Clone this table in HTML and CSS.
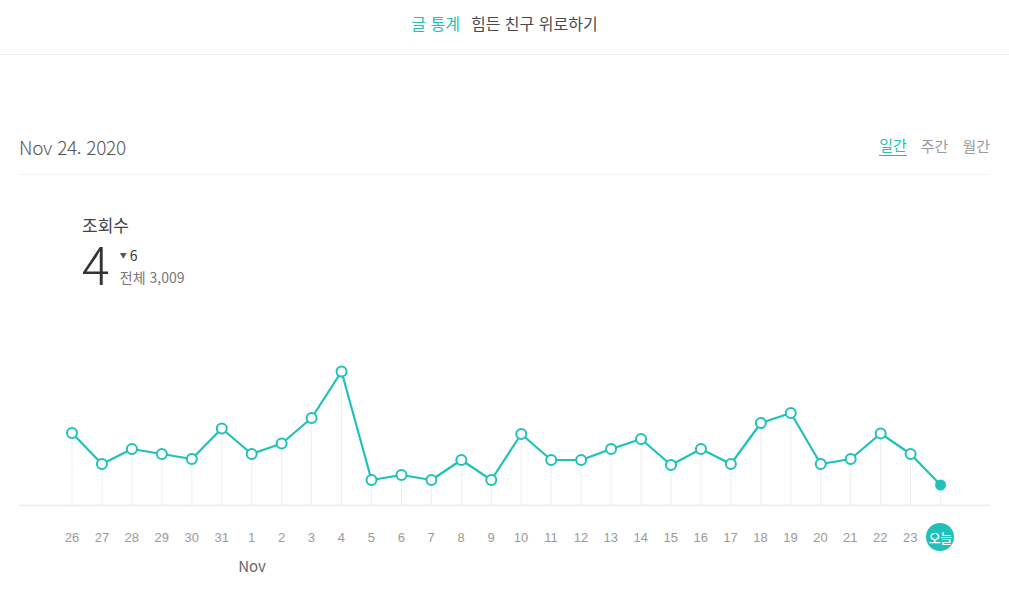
FILE: index.html
```html
<!DOCTYPE html>
<html lang="ko">
<head>
<meta charset="utf-8">
<title>글 통계</title>
<link rel="stylesheet" href="styles.css">
</head>
<body>
<header class="topnav">
  <a class="nav-item active">글 통계</a>
  <a class="nav-item">힘든 친구 위로하기</a>
</header>
<main class="main">
  <div class="date-row">
    <div class="date">Nov 24. 2020</div>
    <nav class="tabs">
      <a class="tab active">일간</a>
      <a class="tab">주간</a>
      <a class="tab">월간</a>
    </nav>
  </div>
  <section class="stats">
    <div class="stat-title">조회수</div>
    <div class="stat-row">
      <div class="stat-value">4</div>
      <div class="stat-side">
        <div class="stat-delta"><span class="tri">▼</span>6</div>
        <div class="stat-total">전체 3,009</div>
      </div>
    </div>
  </section>
  <section class="chart">
    <svg class="chart-svg" width="971" height="210" viewBox="0 0 971 210">
      <g class="grid" stroke="#efefef" stroke-width="1">
        <line x1="53" y1="133" x2="53" y2="205"/>
        <line x1="82.95" y1="164" x2="82.95" y2="205"/>
        <line x1="112.9" y1="149" x2="112.9" y2="205"/>
        <line x1="142.85" y1="154" x2="142.85" y2="205"/>
        <line x1="172.8" y1="159" x2="172.8" y2="205"/>
        <line x1="202.75" y1="128.5" x2="202.75" y2="205"/>
        <line x1="232.7" y1="154" x2="232.7" y2="205"/>
        <line x1="262.65" y1="143.5" x2="262.65" y2="205"/>
        <line x1="292.6" y1="118" x2="292.6" y2="205"/>
        <line x1="322.55" y1="71.5" x2="322.55" y2="205"/>
        <line x1="352.5" y1="180" x2="352.5" y2="205"/>
        <line x1="382.45" y1="175" x2="382.45" y2="205"/>
        <line x1="412.4" y1="180" x2="412.4" y2="205"/>
        <line x1="442.35" y1="160" x2="442.35" y2="205"/>
        <line x1="472.3" y1="180" x2="472.3" y2="205"/>
        <line x1="502.25" y1="134" x2="502.25" y2="205"/>
        <line x1="532.2" y1="160" x2="532.2" y2="205"/>
        <line x1="562.15" y1="160" x2="562.15" y2="205"/>
        <line x1="592.1" y1="149" x2="592.1" y2="205"/>
        <line x1="622.05" y1="139" x2="622.05" y2="205"/>
        <line x1="652" y1="165" x2="652" y2="205"/>
        <line x1="681.95" y1="149" x2="681.95" y2="205"/>
        <line x1="711.9" y1="164" x2="711.9" y2="205"/>
        <line x1="741.85" y1="123" x2="741.85" y2="205"/>
        <line x1="771.8" y1="113" x2="771.8" y2="205"/>
        <line x1="801.75" y1="164" x2="801.75" y2="205"/>
        <line x1="831.7" y1="159" x2="831.7" y2="205"/>
        <line x1="861.65" y1="133.5" x2="861.65" y2="205"/>
        <line x1="891.6" y1="154" x2="891.6" y2="205"/>
        <line x1="921.55" y1="185" x2="921.55" y2="205"/>
      </g>
      <line class="baseline" x1="0" y1="205.5" x2="971" y2="205.5"/>
      <polyline class="series" points="53,133 82.95,164 112.9,149 142.85,154 172.8,159 202.75,128.5 232.7,154 262.65,143.5 292.6,118 322.55,71.5 352.5,180 382.45,175 412.4,180 442.35,160 472.3,180 502.25,134 532.2,160 562.15,160 592.1,149 622.05,139 652,165 681.95,149 711.9,164 741.85,123 771.8,113 801.75,164 831.7,159 861.65,133.5 891.6,154 921.55,185"/>
      <g class="dots">
        <circle cx="53" cy="133" r="5"/>
        <circle cx="82.95" cy="164" r="5"/>
        <circle cx="112.9" cy="149" r="5"/>
        <circle cx="142.85" cy="154" r="5"/>
        <circle cx="172.8" cy="159" r="5"/>
        <circle cx="202.75" cy="128.5" r="5"/>
        <circle cx="232.7" cy="154" r="5"/>
        <circle cx="262.65" cy="143.5" r="5"/>
        <circle cx="292.6" cy="118" r="5"/>
        <circle cx="322.55" cy="71.5" r="5"/>
        <circle cx="352.5" cy="180" r="5"/>
        <circle cx="382.45" cy="175" r="5"/>
        <circle cx="412.4" cy="180" r="5"/>
        <circle cx="442.35" cy="160" r="5"/>
        <circle cx="472.3" cy="180" r="5"/>
        <circle cx="502.25" cy="134" r="5"/>
        <circle cx="532.2" cy="160" r="5"/>
        <circle cx="562.15" cy="160" r="5"/>
        <circle cx="592.1" cy="149" r="5"/>
        <circle cx="622.05" cy="139" r="5"/>
        <circle cx="652" cy="165" r="5"/>
        <circle cx="681.95" cy="149" r="5"/>
        <circle cx="711.9" cy="164" r="5"/>
        <circle cx="741.85" cy="123" r="5"/>
        <circle cx="771.8" cy="113" r="5"/>
        <circle cx="801.75" cy="164" r="5"/>
        <circle cx="831.7" cy="159" r="5"/>
        <circle cx="861.65" cy="133.5" r="5"/>
        <circle cx="891.6" cy="154" r="5"/>
      </g>
      <circle class="dot-today" cx="921.55" cy="185" r="5.5"/>
    </svg>
    <div class="labels">
      <span class="lbl">26</span><span class="lbl">27</span><span class="lbl">28</span><span class="lbl">29</span><span class="lbl">30</span><span class="lbl">31</span><span class="lbl">1</span><span class="lbl">2</span><span class="lbl">3</span><span class="lbl">4</span><span class="lbl">5</span><span class="lbl">6</span><span class="lbl">7</span><span class="lbl">8</span><span class="lbl">9</span><span class="lbl">10</span><span class="lbl">11</span><span class="lbl">12</span><span class="lbl">13</span><span class="lbl">14</span><span class="lbl">15</span><span class="lbl">16</span><span class="lbl">17</span><span class="lbl">18</span><span class="lbl">19</span><span class="lbl">20</span><span class="lbl">21</span><span class="lbl">22</span><span class="lbl">23</span><span class="lbl today"><span class="badge">오늘</span></span>
    </div>
    <div class="months">
      <span class="month">Nov</span>
    </div>
  </section>
</main>
</body>
</html>
```

FILE: styles.css
```css
* { box-sizing: border-box; }

html, body {
  margin: 0;
  padding: 0;
  background: #ffffff;
}

body {
  font-family: "Noto Sans CJK KR", "Noto Sans", sans-serif;
  color: #444;
  width: 1009px;
  height: 595px;
  overflow: hidden;
}

.topnav {
  height: 55px;
  border-bottom: 1px solid #ececec;
  display: flex;
  justify-content: center;
  align-items: center;
  gap: 11px;
  padding-bottom: 9px;
  font-size: 16px;
}

.nav-item {
  color: #4a4a4a;
  text-decoration: none;
}

.nav-item.active {
  color: #22c1b8;
}

.main {
  padding: 0 19px;
}

.date-row {
  margin-top: 72px;
  height: 48px;
  padding-bottom: 9px;
  display: flex;
  align-items: center;
  justify-content: space-between;
  border-bottom: 1px solid #f3f3f3;
}

.date {
  font-size: 19px;
  color: #555;
  font-weight: 300;
  letter-spacing: -0.3px;
}

.tabs {
  display: flex;
  gap: 14px;
  font-size: 15px;
}

.tab {
  color: #9a9a9a;
  text-decoration: none;
  line-height: 20px;
}

.tab.active {
  color: #1fc1b8;
  border-bottom: 1.5px solid #1fc1b8;
  line-height: 18px;
}

.stats {
  padding-left: 63px;
  margin-top: 38px;
}

.stat-title {
  font-size: 17px;
  line-height: 24px;
  color: #444;
}

.stat-row {
  display: flex;
  align-items: flex-start;
}

.stat-value {
  font-size: 52px;
  line-height: 52px;
  font-weight: 300;
  color: #333;
}

.stat-side {
  margin-left: 10px;
  margin-top: 7px;
  font-size: 14px;
  line-height: 22px;
}

.stat-delta {
  color: #333;
  display: flex;
  align-items: center;
}

.tri {
  font-size: 7px;
  color: #555;
  margin-right: 3px;
}

.stat-total {
  color: #777;
}

.chart {
  margin-top: 11px;
}

.chart-svg {
  display: block;
}

.baseline {
  stroke: #ececec;
  stroke-width: 1.5;
}

.series {
  fill: none;
  stroke: #1fc1b8;
  stroke-width: 2.2;
  stroke-linejoin: round;
}

.dots circle {
  fill: #fff;
  stroke: #1fc1b8;
  stroke-width: 2;
}

.dot-today {
  fill: #1fc1b8;
}

.labels {
  display: flex;
  margin-top: 13px;
  padding-left: 38px;
  height: 28px;
  align-items: center;
}

.lbl {
  width: 29.95px;
  text-align: center;
  font-family: "Liberation Sans", Arial, sans-serif;
  font-size: 13px;
  color: #9a9a9a;
}

.lbl.today {
  display: flex;
  justify-content: center;
}

.badge {
  width: 28px;
  height: 28px;
  border-radius: 50%;
  background: #1fc1b8;
  color: #fff;
  font-family: "Noto Sans CJK KR", sans-serif;
  font-size: 13px;
  font-weight: 500;
  display: flex;
  align-items: center;
  justify-content: center;
  letter-spacing: -0.5px;
}

.months {
  margin-top: 5px;
  padding-left: 38px;
  display: flex;
}

.month {
  margin-left: 180px;
  width: 30px;
  text-align: center;
  font-size: 15px;
  line-height: 20px;
  color: #666;
}
```
